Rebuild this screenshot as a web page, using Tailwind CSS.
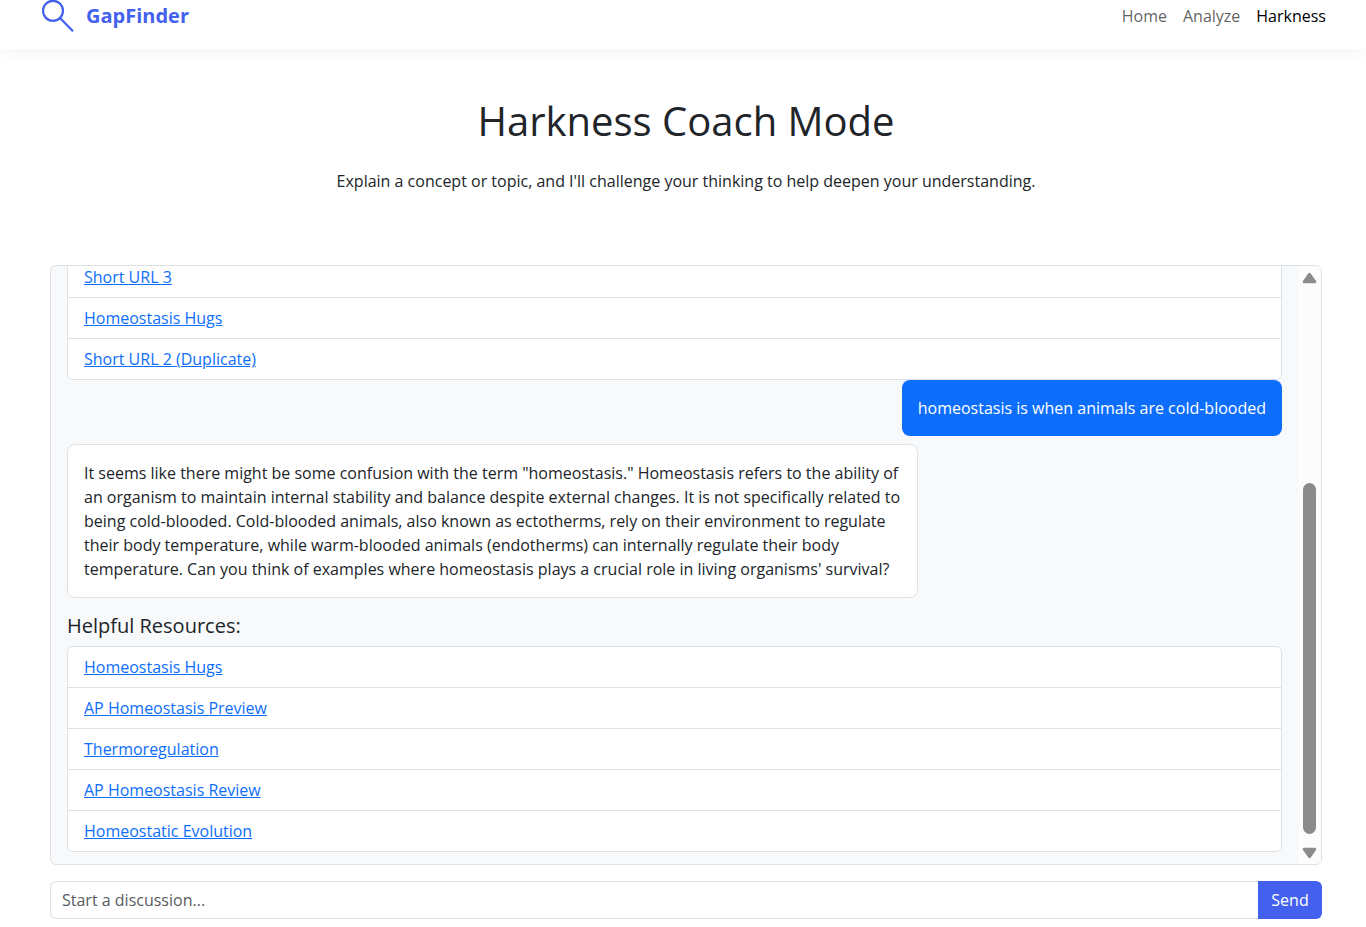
<!DOCTYPE html>
<html lang="en">
<head>
  <meta charset="UTF-8" />
  <meta name="viewport" content="width=device-width, initial-scale=1.0"/>
  <title>GapFinder - Harkness Coach Mode</title>
  <script src="https://cdn.jsdelivr.net/npm/@tailwindcss/browser@4"></script>
</head>
<body class="bg-white text-[#212529] text-base font-['Open_Sans','Noto_Sans',sans-serif]">

  <!-- Navbar -->
  <nav class="flex items-start justify-between h-[49px] pl-[42px] pr-10 bg-white shadow-[0_2px_15px_rgba(0,0,0,0.05)]">
    <a href="#" class="flex items-center gap-3 h-8 text-xl font-bold text-[#4361ee]">
      <svg class="w-8 h-8" viewBox="0 0 32 32" fill="none" stroke="#4361ee" stroke-width="2.2">
        <circle cx="11" cy="10.8" r="10"/>
        <path d="M18 18L31 31.3"/>
      </svg>
      GapFinder
    </a>
    <ul class="flex items-center gap-4 h-8">
      <li><a href="#" class="text-black/65">Home</a></li>
      <li><a href="#" class="text-black/65">Analyze</a></li>
      <li><a href="#" class="text-black">Harkness</a></li>
    </ul>
  </nav>

  <main class="pl-[50px] pr-11 pt-12">
    <header class="text-center">
      <h1 class="text-[40px] leading-[48px]">Harkness Coach Mode</h1>
      <p class="mt-6">Explain a concept or topic, and I'll challenge your thinking to help deepen your understanding.</p>
    </header>

    <!-- Chat box -->
    <section class="flex h-[600px] mt-18 border border-[#dee2e6] rounded-md bg-[#f8f9fa] overflow-hidden">
      <div class="flex flex-1 flex-col justify-end px-4 pb-3 overflow-hidden">
        <ul class="shrink-0 border border-[#dee2e6] rounded-md bg-white divide-y divide-[#dee2e6]">
          <li class="px-4 py-2"><a href="#" class="text-[#0d6efd] underline">Short URL 3</a></li>
          <li class="px-4 py-2"><a href="#" class="text-[#0d6efd] underline">Homeostasis Hugs</a></li>
          <li class="px-4 py-2"><a href="#" class="text-[#0d6efd] underline">Short URL 2 (Duplicate)</a></li>
        </ul>

        <div class="shrink-0 self-end max-w-[70%] mb-2 p-4 rounded-lg bg-[#0d6efd] text-white">homeostasis is when animals are cold-blooded</div>

        <div class="shrink-0 self-start max-w-[70%] p-4 border border-[#dee2e6] rounded-lg bg-white">It seems like there might be some confusion with the term "homeostasis." Homeostasis refers to the ability of an organism to maintain internal stability and balance despite external changes. It is not specifically related to being cold-blooded. Cold-blooded animals, also known as ectotherms, rely on their environment to regulate their body temperature, while warm-blooded animals (endotherms) can internally regulate their body temperature. Can you think of examples where homeostasis plays a crucial role in living organisms' survival?</div>

        <h5 class="mt-4 mb-2 text-xl leading-6">Helpful Resources:</h5>
        <ul class="shrink-0 border border-[#dee2e6] rounded-md bg-white divide-y divide-[#dee2e6]">
          <li class="px-4 py-2"><a href="#" class="text-[#0d6efd] underline">Homeostasis Hugs</a></li>
          <li class="px-4 py-2"><a href="#" class="text-[#0d6efd] underline">AP Homeostasis Preview</a></li>
          <li class="px-4 py-2"><a href="#" class="text-[#0d6efd] underline">Thermoregulation</a></li>
          <li class="px-4 py-2"><a href="#" class="text-[#0d6efd] underline">AP Homeostasis Review</a></li>
          <li class="px-4 py-2"><a href="#" class="text-[#0d6efd] underline">Homeostatic Evolution</a></li>
        </ul>
      </div>

      <!-- Scrollbar -->
      <div class="flex flex-col items-center justify-between w-[23px] pt-1.5 pb-[5px] bg-[#fcfcfc]" aria-hidden="true">
        <svg class="w-[15px] h-3" viewBox="0 0 15 12" fill="#8b8b8b" stroke="#8b8b8b" stroke-width="3" stroke-linejoin="round"><path d="M7.5 2.4L12.8 9.8H2.2Z"/></svg>
        <div class="w-[13px] h-[351px] mt-auto mb-[13px] rounded-full bg-[#8b8b8b]"></div>
        <svg class="w-[15px] h-3" viewBox="0 0 15 12" fill="#8b8b8b" stroke="#8b8b8b" stroke-width="3" stroke-linejoin="round"><path d="M7.5 9.6L2.2 2.2H12.8Z"/></svg>
      </div>
    </section>

    <!-- Message form -->
    <form class="flex mt-4">
      <input type="text" aria-label="Message" placeholder="Start a discussion..." class="flex-1 h-[38px] px-[11px] border border-r-0 border-[#dee2e6] rounded-l-md bg-white placeholder:text-[#595c5f] focus:outline-none"/>
      <button type="submit" class="w-16 h-[38px] rounded-r-md bg-[#4361ee] text-white">Send</button>
    </form>
  </main>

</body>
</html>
